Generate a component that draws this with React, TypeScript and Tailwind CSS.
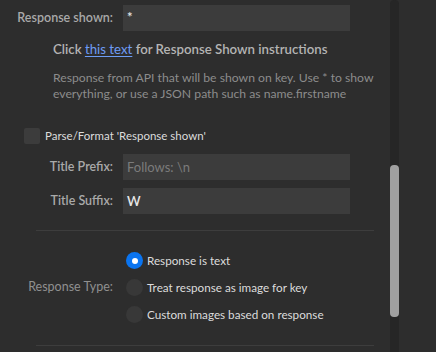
import React from "react";

const font = { fontFamily: 'Lato, "Noto Sans", sans-serif' };

type FieldProps = {
  label: string;
  value?: string;
  placeholder?: string;
};

const Field = ({ label, value, placeholder }: FieldProps) => (
  <div className="flex items-center">
    <div className="w-[113px] text-right text-[12.5px] font-semibold text-[#a9a9a9]">{label}</div>
    <div className="ml-[10px] flex h-[26px] w-[227px] items-center bg-[#3c3c3c] px-[4px] text-[13px]">
      {value ? (
        <span className="font-semibold text-[#e6e6e6]">{value}</span>
      ) : (
        <span className="text-[#7b7b7b]">{placeholder}</span>
      )}
    </div>
  </div>
);

const Radio = ({ checked, label }: { checked?: boolean; label: string }) => (
  <div className="flex h-[27px] items-center">
    {checked ? (
      <span className="flex h-[17px] w-[17px] items-center justify-center rounded-full bg-[#0a74f0]">
        <span className="h-[6px] w-[6px] rounded-full bg-white" />
      </span>
    ) : (
      <span className="h-[17px] w-[17px] rounded-full bg-[#383838]" />
    )}
    <span className="ml-[4px] text-[11.7px] text-[#dcdcdc]">{label}</span>
  </div>
);

export default function App() {
  return (
    <div className="flex h-[352px] w-[436px] overflow-hidden bg-[#2d2d2d]" style={font}>
      <div className="w-[390px] shrink-0">
        <div className="mt-[5px]">
          <Field label="Response shown:" value="*" />
        </div>
        <div className="ml-[53px] mt-[8px] text-[13.25px] font-semibold leading-[20px] text-[#b4b4b4]">
          Click{" "}
          <a className="font-normal text-[#6d9cf5] underline underline-offset-2">this text</a>{" "}
          for Response Shown instructions
        </div>
        <div className="ml-[53px] mt-[11px] whitespace-nowrap text-[12.2px] leading-[16px] text-[#8c8c8c]">
          Response from API that will be shown on key. Use * to show
          <br />
          everything, or use a JSON path such as name.firstname
        </div>
        <div className="ml-[24px] mt-[25px] flex items-center">
          <span className="h-[16px] w-[16px] rounded-[2px] bg-[#3c3c3c]" />
          <span className="ml-[5px] text-[11.5px] text-[#dcdcdc]">Parse/Format 'Response shown'</span>
        </div>
        <div className="mt-[10px] flex flex-col gap-[8px]">
          <Field label="Title Prefix:" placeholder="Follows: \n" />
          <Field label="Title Suffix:" value="W" />
        </div>
        <div className="ml-[36px] mt-[16px] h-px w-[338px] bg-[#3d3d3d]" />
        <div className="mt-[16px] flex items-center">
          <div className="w-[113px] text-right text-[12.5px] text-[#909090]">Response Type:</div>
          <div className="ml-[13px] flex flex-col">
            <Radio checked label="Response is text" />
            <Radio label="Treat response as image for key" />
            <Radio label="Custom images based on response" />
          </div>
        </div>
        <div className="ml-[36px] mt-[17px] h-px w-[338px] bg-[#3d3d3d]" />
      </div>
      <div className="relative w-[9px] shrink-0 rounded-t-[4px] bg-[#262626]">
        <div className="absolute left-0 top-[165px] h-[152px] w-[9px] rounded-[4px] bg-[#a0a0a0]" />
      </div>
      <div className="flex-1" />
    </div>
  );
}
